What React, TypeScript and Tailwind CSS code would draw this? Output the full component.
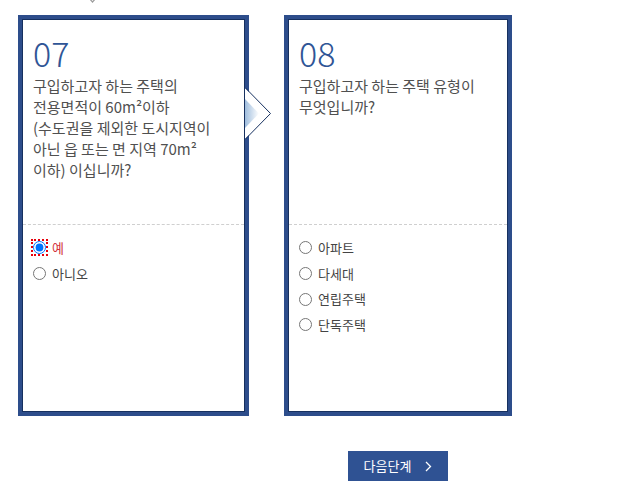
import React from "react";

const font = { fontFamily: '"Noto Sans CJK KR", "Noto Sans", sans-serif' };

type Opt = { label: string; checked?: boolean };

function Options({ items, name }: { items: Opt[]; name: string }) {
  return (
    <div className="pt-[10px] pl-[10px]">
      {items.map((o) => (
        <label key={o.label} className="flex h-[25.7px] items-center gap-[6px] text-[13px]">
          <input
            type="radio"
            name={name}
            defaultChecked={o.checked}
            className={
              "m-0 h-[13px] w-[13px] " +
              (o.checked ? "outline-2 outline-dotted outline-red-600 outline-offset-0" : "")
            }
          />
          <span className={o.checked ? "text-[#d3323c]" : "text-[#444]"}>{o.label}</span>
        </label>
      ))}
    </div>
  );
}

function Card({
  num,
  width,
  lines,
  items,
  name,
  arrow,
}: {
  num: string;
  width: string;
  lines: string[];
  items: Opt[];
  name: string;
  arrow?: boolean;
}) {
  return (
    <div className={"relative h-[401px] bg-[#2d4d8b] p-[4px] " + width}>
      <div className="h-full border border-[#16305f] bg-white">
        <div className="h-[205px] border-b border-dashed border-[#cfcfcf] px-[10px] pt-[16px]">
          <div className="text-[34px] font-light leading-none text-[#2f5596]">{num}</div>
          <div className="mt-[5px] text-[15px] leading-[21px] text-[#505050]">
            {lines.map((l) => (
              <div key={l}>{l}</div>
            ))}
          </div>
        </div>
        <Options items={items} name={name} />
      </div>
      {arrow && (
        <svg className="absolute left-[227px] top-[73px]" width="27" height="51" viewBox="0 0 27 51">
          <defs>
            <linearGradient id="ag" x1="0" y1="0" x2="1" y2="0">
              <stop offset="0" stopColor="#9fbddd" />
              <stop offset="1" stopColor="#ffffff" />
            </linearGradient>
          </defs>
          <polygon points="0,0 25.5,25.5 0,51" fill="#fff" />
          <polygon points="0,11 14,25.5 0,40" fill="url(#ag)" />
          <polyline points="0.5,0 25.5,25.5 0.5,51" fill="none" stroke="#16305f" strokeWidth="1" />
        </svg>
      )}
    </div>
  );
}

export default function App() {
  return (
    <div className="min-h-[496px] w-[624px] bg-white" style={font}>
      <div className="h-[15px] pl-[88px]">
        <svg width="10" height="4" viewBox="0 0 10 4">
          <polyline points="1,-2 4.5,2 8,-2" fill="none" stroke="#9a9a9a" strokeWidth="1.2" />
        </svg>
      </div>
      <div className="flex gap-[35px] pl-[18px]">
        <Card
          num="07"
          width="w-[231px]"
          name="q7"
          arrow
          lines={[
            "구입하고자 하는 주택의",
            "전용면적이 60m²이하",
            "(수도권을 제외한 도시지역이",
            "아닌 읍 또는 면 지역 70m²",
            "이하) 이십니까?",
          ]}
          items={[{ label: "예", checked: true }, { label: "아니오" }]}
        />
        <Card
          num="08"
          width="w-[228px]"
          name="q8"
          lines={["구입하고자 하는 주택 유형이", "무엇입니까?"]}
          items={[{ label: "아파트" }, { label: "다세대" }, { label: "연립주택" }, { label: "단독주택" }]}
        />
      </div>
      <div className="pl-[348px] pt-[35px]">
        <button className="flex h-[30px] w-[100px] items-center justify-center gap-[14px] bg-[#2f5293] text-[13px] text-white">
          <span>다음단계</span>
          <svg width="7" height="11" viewBox="0 0 7 11">
            <polyline points="1,1 5.5,5.5 1,10" fill="none" stroke="#fff" strokeWidth="1.3" />
          </svg>
        </button>
      </div>
    </div>
  );
}
